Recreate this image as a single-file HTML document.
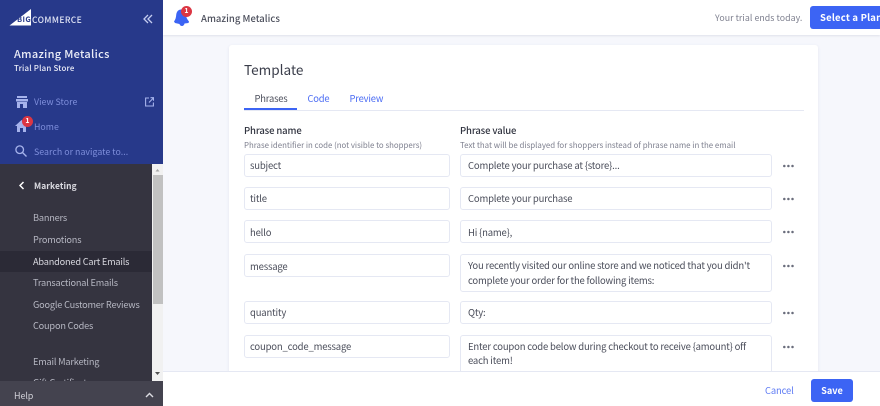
<!DOCTYPE html>
<html><head><meta charset="utf-8">
<style>
html,body{margin:0;padding:0;width:880px;height:406px;overflow:hidden;background:#f6f7fc}
body{position:relative;font-family:"Noto Sans CJK JP","Liberation Sans",sans-serif;font-size:9px;color:#313440}
.a{position:absolute;white-space:nowrap;line-height:14px}
.box{position:absolute;background:#fff;border:1px solid #e5e8f3;border-radius:3px;box-sizing:border-box}
.f{position:absolute;white-space:nowrap;font-size:9.500px;letter-spacing:-.18px;line-height:15px;color:#4a4d5a}
.d{position:absolute;left:783px;width:11px;height:4px}
.m{position:absolute;left:33px;color:#b5b6c1;font-size:9.200px;letter-spacing:-.19px;line-height:14px;white-space:nowrap}
</style></head><body>
<svg width="0" height="0" style="position:absolute"><symbol id="dd" viewBox="0 0 11 4"><circle cx="1.300" cy="2" r="1.250" fill="#6a6d7c"/><circle cx="5.400" cy="2" r="1.250" fill="#6a6d7c"/><circle cx="9.500" cy="2" r="1.250" fill="#6a6d7c"/></symbol></svg>
<!-- top bar -->
<div style="position:absolute;left:163px;top:0;width:717px;height:35px;background:#fff;box-shadow:0 1px 2px #dfe1ea"></div>
<svg style="position:absolute;left:173px;top:9px" width="18" height="18" viewBox="0 0 18 18"><path d="M8 0.5c3.2 0 4.7 2.6 5 5.5.2 2.400 1 4 3 6.500l-.5 1.500-4 .5c-.3 1.800-1.500 2.500-2.500 2.500-1.200 0-2.200-.7-2.500-2l-4.500-1-1-1.500c1.500-2 2-4 2.200-6.500C3.500 3 5 .5 8 .5z" fill="#3c64f4"/></svg>
<div style="position:absolute;left:181px;top:6px;width:11px;height:11px;border-radius:50%;background:#db3643;color:#fff;font-size:7px;font-weight:700;line-height:11px;text-align:center">1</div>
<div class="a" style="left:201px;top:11px;font-size:9.500px;font-weight:500;color:#4c4f5c;letter-spacing:.03px">Amazing Metalics</div>
<div class="a" style="left:715px;top:11px;font-size:8.800px;color:#7d7f8e;letter-spacing:.05px">Your trial ends today.</div>
<div style="position:absolute;left:810px;top:6px;width:80px;height:23px;background:#3c64f4;border-radius:3px;color:#fff;font-size:9.500px;font-weight:700;line-height:23px;padding-left:10px;box-sizing:border-box;white-space:nowrap;letter-spacing:.2px">Select a Plan</div>
<!-- card -->
<div style="position:absolute;left:229px;top:45px;width:589px;height:340px;background:#fff;border-radius:3px;box-shadow:0 1px 3px #e3e5ef"></div>
<div class="a" style="left:244px;top:59px;font-size:13.600px;line-height:20px;color:#3a3d4a">Template</div>
<div style="position:absolute;left:244px;top:110px;width:560px;height:1px;background:#e5e8f3"></div>
<div style="position:absolute;left:244px;top:108px;width:53px;height:2px;background:#3c64f4"></div>
<div class="a" style="left:254.500px;top:91px;font-size:9.400px;letter-spacing:-.18px;color:#4c4f5c">Phrases</div>
<div class="a" style="left:307.500px;top:91px;font-size:9.400px;letter-spacing:-.18px;color:#4b6cf4">Code</div>
<div class="a" style="left:349.500px;top:91px;font-size:9.400px;letter-spacing:-.18px;color:#4b6cf4">Preview</div>
<div class="a" style="left:244px;top:123px;font-size:9.500px;letter-spacing:-.12px;font-weight:500;color:#313440">Phrase name</div>
<div class="a" style="left:460px;top:123px;font-size:9.500px;letter-spacing:-.12px;font-weight:500;color:#313440">Phrase value</div>
<div class="a" style="left:244px;top:138.500px;font-size:7.850px;color:#7d7f8e">Phrase identifier in code (not visible to shoppers)</div>
<div class="a" style="left:460px;top:138.500px;font-size:7.900px;color:#7d7f8e">Text that will be displayed for shoppers instead of phrase name in the email</div>
<!-- rows -->
<div class="box" style="left:244px;top:154px;width:206px;height:23px"></div><div class="f" style="left:250px;top:158px">subject</div>
<div class="box" style="left:460px;top:154px;width:312px;height:23px"></div><div class="f" style="left:468px;top:158px">Complete your purchase at {store}...</div>
<svg class="d" style="top:164px"><use href="#dd"/></svg>
<div class="box" style="left:244px;top:187px;width:206px;height:23px"></div><div class="f" style="left:250px;top:191px">title</div>
<div class="box" style="left:460px;top:187px;width:312px;height:23px"></div><div class="f" style="left:468px;top:191px">Complete your purchase</div>
<svg class="d" style="top:197px"><use href="#dd"/></svg>
<div class="box" style="left:244px;top:220px;width:206px;height:23px"></div><div class="f" style="left:250px;top:225px">hello</div>
<div class="box" style="left:460px;top:220px;width:312px;height:23px"></div><div class="f" style="left:468px;top:225px">Hi {name},</div>
<svg class="d" style="top:230px"><use href="#dd"/></svg>
<div class="box" style="left:244px;top:254px;width:206px;height:23px"></div><div class="f" style="left:250px;top:259px">message</div>
<div class="box" style="left:460px;top:254px;width:312px;height:38px"></div><div class="f" style="left:468px;top:258px">You recently visited our online store and we noticed that you didn't</div><div class="f" style="left:468px;top:273px">complete your order for the following items:</div>
<svg class="d" style="top:264px"><use href="#dd"/></svg>
<div class="box" style="left:244px;top:301px;width:206px;height:23px"></div><div class="f" style="left:250px;top:305px">quantity</div>
<div class="box" style="left:460px;top:301px;width:312px;height:23px"></div><div class="f" style="left:468px;top:305px">Qty:</div>
<svg class="d" style="top:311px"><use href="#dd"/></svg>
<div class="box" style="left:244px;top:335px;width:206px;height:23px"></div><div class="f" style="left:250px;top:339px">coupon_code_message</div>
<div class="box" style="left:460px;top:335px;width:312px;height:50px"></div><div class="f" style="left:468px;top:339px">Enter coupon code below during checkout to receive {amount} off</div><div class="f" style="left:468px;top:353px">each item!</div>
<svg class="d" style="top:345px"><use href="#dd"/></svg>
<!-- footer -->
<div style="position:absolute;left:163px;top:371px;width:717px;height:35px;background:#fff;border-top:1px solid #e5e8f3;box-sizing:border-box"></div>
<div class="a" style="left:765px;top:383px;font-size:9.400px;letter-spacing:-.12px;color:#5f7cf4">Cancel</div>
<div style="position:absolute;left:811px;top:379px;width:42px;height:23px;background:#3c64f4;border-radius:3px;color:#fff;font-size:9.200px;font-weight:700;line-height:23px;text-align:center">Save</div>
<!-- sidebar -->
<div style="position:absolute;left:0;top:0;width:163px;height:164px;background:#27398a"></div>
<div style="position:absolute;left:0;top:164px;width:152px;height:217px;background:#353440"></div>
<div style="position:absolute;left:0;top:251px;width:152px;height:21px;background:#2b2a36"></div>
<div style="position:absolute;left:152px;top:164px;width:11px;height:217px;background:#f1f1f1"></div>
<div style="position:absolute;left:153px;top:175px;width:10px;height:129px;background:#c1c1c1"></div>
<svg style="position:absolute;left:152px;top:164px" width="11" height="217"><path d="M3.500 7.500L5.500 5L7.500 7.500z" fill="#a3a3a3"/><path d="M3 208h5l-2.500 3z" fill="#505050"/></svg>
<svg style="position:absolute;left:9px;top:9px" width="23" height="17"><path d="M0.500 16.500L22 0v16.500z" fill="#fff"/></svg>
<div class="a" style="left:17px;top:13px;font-size:7.500px;font-weight:700;color:#27398a;letter-spacing:.4px">BIG</div>
<div class="a" style="left:32px;top:13px;font-size:8.500px;font-weight:500;color:#dfe3f4;letter-spacing:.4px">COMMERCE</div>
<svg style="position:absolute;left:143px;top:14px" width="10" height="10" fill="none" stroke="#c5cdf0" stroke-width="1.300"><path d="M5 1L1 5l4 4M9 1L5 5l4 4"/></svg>
<div class="a" style="left:14px;top:46px;font-size:11px;line-height:16px;font-weight:500;color:#eceef8;letter-spacing:.3px">Amazing Metalics</div>
<div class="a" style="left:14px;top:62px;font-size:7.900px;font-weight:500;color:#eceef8;letter-spacing:.2px">Trial Plan Store</div>
<svg style="position:absolute;left:16px;top:96px" width="12" height="12" fill="#a6b3ec"><path d="M1 0h10v2H1zM0 3h12v2.500H0zM1 6h10v6H7V8H4v4H1z"/></svg>
<div class="a" style="left:34px;top:95px;font-size:8.800px;color:#7f8fdc;letter-spacing:.02px">View Store</div>
<svg style="position:absolute;left:145px;top:97px" width="9" height="10" fill="none" stroke="#a6b3ec" stroke-width="1.100"><path d="M4 1H.6v8h7.800V5.500M4 5.500L8.400 1M5.500.7h3v3"/></svg>
<svg style="position:absolute;left:15px;top:120px" width="13" height="12" fill="#a6b3ec"><path d="M6.500 0L13 6h-2v6H8V8H5v4H2V6H0z"/></svg>
<div style="position:absolute;left:22px;top:116px;width:11px;height:11px;border-radius:50%;background:#db3643;color:#fff;font-size:7px;font-weight:700;line-height:11px;text-align:center">1</div>
<div class="a" style="left:34px;top:120px;font-size:8.800px;color:#7f8fdc;letter-spacing:.02px">Home</div>
<svg style="position:absolute;left:15px;top:145px" width="12" height="12" fill="none" stroke="#a6b3ec" stroke-width="1.300"><circle cx="4.700" cy="4.700" r="3.800"/><path d="M7.500 7.500L11.500 11.500"/></svg>
<div class="a" style="left:34px;top:145px;font-size:8.800px;color:#7f8fdc;letter-spacing:.03px">Search or navigate to...</div>
<svg style="position:absolute;left:19px;top:181px" width="6" height="9" fill="none" stroke="#fff" stroke-width="1.500"><path d="M4.500 1L1 4.500l3.500 3.500"/></svg>
<div class="a" style="left:34px;top:179px;font-size:8.400px;font-weight:700;color:#dcdce2;letter-spacing:.1px">Marketing</div>
<div class="m" style="top:210px">Banners</div>
<div class="m" style="top:232px">Promotions</div>
<div class="m" style="top:254px;color:#d6d6dd">Abandoned Cart Emails</div>
<div class="m" style="top:275px">Transactional Emails</div>
<div class="m" style="top:297px">Google Customer Reviews</div>
<div class="m" style="top:318px">Coupon Codes</div>
<div class="m" style="top:354px">Email Marketing</div>
<div class="m" style="top:375px">Gift Certificates</div>
<div style="position:absolute;left:0;top:381px;width:163px;height:25px;background:#44434f"></div>
<div class="a" style="left:14px;top:389px;font-size:9px;letter-spacing:-.1px;color:#cfcfd6">Help</div>
<svg style="position:absolute;left:145px;top:392px" width="9" height="6" fill="none" stroke="#dcdce2" stroke-width="1.400"><path d="M1 5l3.500-3.500L8 5"/></svg>
</body></html>
